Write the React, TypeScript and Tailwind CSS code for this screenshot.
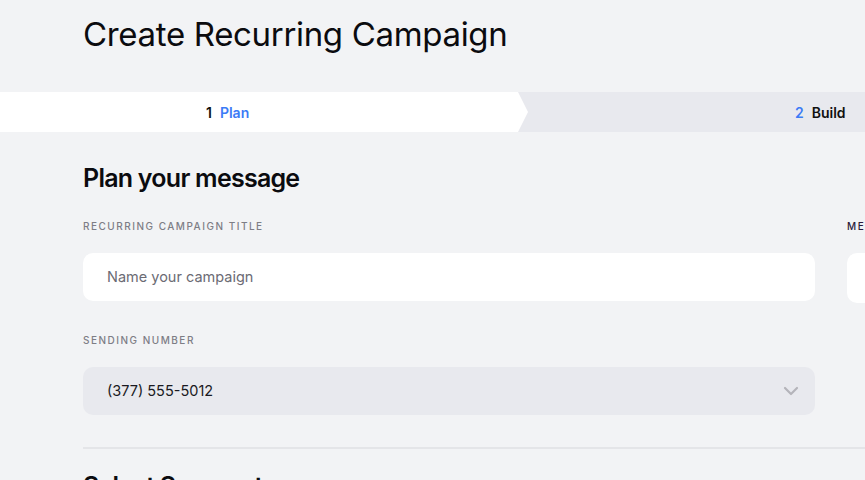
import React from "react";

export default function App() {
  return (
    <div
      className="w-[865px] h-[480px] overflow-hidden bg-[#f2f3f5] text-[#111]"
      style={{ fontFamily: "Inter, 'Noto Sans', sans-serif" }}
    >
      <div className="pl-[83px] pt-[14px] h-[92px]">
        <h1 className="text-[33px] leading-[40px] font-normal tracking-[-0.01em] text-[#0b0b0f]">
          Create Recurring Campaign
        </h1>
      </div>

      {/* stepper */}
      <div className="flex h-[40px] w-[1400px]">
        <div className="relative w-[518px] bg-white flex items-center pl-[206px] text-[14px] font-semibold">
          <span className="text-[#111]">1</span>
          <span className="ml-[8px] text-[#3b7bf6]">Plan</span>
          <svg
            className="absolute right-[-10px] top-0 h-[40px] w-[10px]"
            viewBox="0 0 10 40"
            preserveAspectRatio="none"
          >
            <polygon points="0,0 10,20 0,40" fill="#ffffff" />
          </svg>
        </div>
        <div className="flex-1 bg-[#e8e9ee] flex items-center pl-[277px] text-[14px] font-semibold">
          <span className="text-[#3b7bf6]">2</span>
          <span className="ml-[8px] text-[#111]">Build</span>
        </div>
      </div>

      <div className="pl-[83px] pt-[30px]">
        <h2 className="text-[25px] leading-[32px] font-semibold tracking-[-0.03em] text-[#0b0b0f]">
          Plan your message
        </h2>

        <div className="flex gap-[32px] mt-[26px] w-[1200px]">
          <div className="w-[732px] shrink-0">
            <div className="text-[10px] leading-[12px] tracking-[0.15em] text-[#7d7d85] font-medium">
              RECURRING CAMPAIGN TITLE
            </div>
            <div className="mt-[21px] h-[48px] bg-white rounded-[10px] flex items-center pl-[24px] text-[14.5px] text-[#6b6b74]">
              Name your campaign
            </div>

            <div className="mt-[33px] text-[10px] leading-[12px] tracking-[0.15em] text-[#7d7d85] font-medium">
              SENDING NUMBER
            </div>
            <div className="mt-[21px] h-[48px] bg-[#e8e9ee] rounded-[10px] flex items-center justify-between pl-[24px] pr-[16px] text-[14.5px] text-[#1a1a22]">
              <span>(377) 555-5012</span>
              <svg width="16" height="10" viewBox="0 0 16 10" fill="none">
                <path d="M2 2 L8 8 L14 2" stroke="#b4b4ba" strokeWidth="2.2" strokeLinecap="round" strokeLinejoin="round" />
              </svg>
            </div>
          </div>
          <div className="flex-1">
            <div className="text-[10px] leading-[12px] tracking-[0.15em] text-[#2a1a3a] font-medium">
              MESSAGE
            </div>
            <div className="mt-[21px] h-[50px] bg-white rounded-[10px]" />
          </div>
        </div>

        <div className="mt-[32px] h-[2px] bg-[#e4e5e8]" />
        <h2 className="mt-[21px] text-[25px] leading-[32px] font-semibold tracking-[-0.03em] text-[#0b0b0f]">
          Select Segment
        </h2>
      </div>
    </div>
  );
}
